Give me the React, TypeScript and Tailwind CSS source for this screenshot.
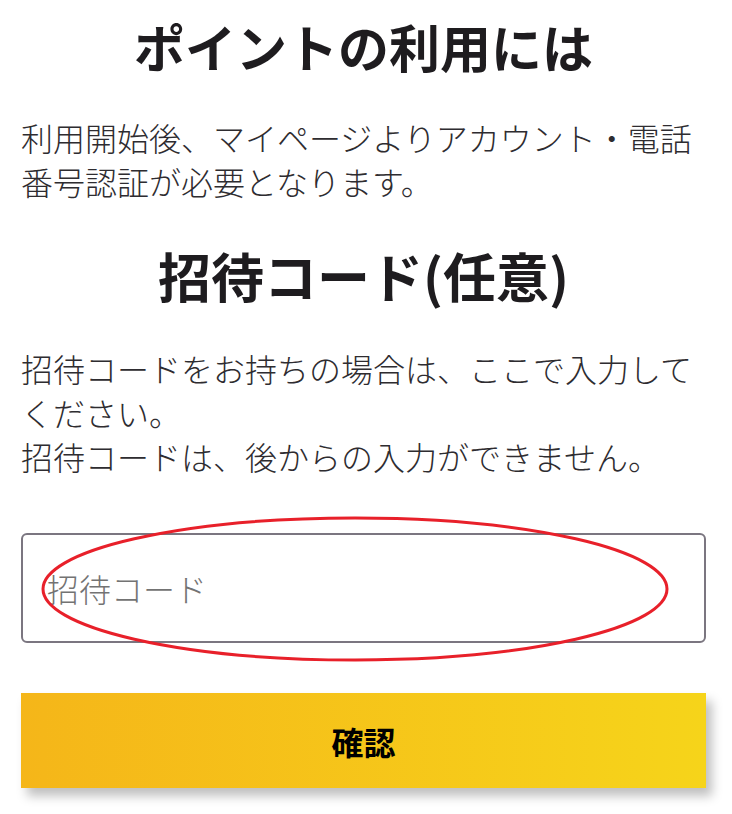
export default function App() {
  return (
    <div
      className="min-h-[814px] w-[732px] bg-white pl-[21px] pr-[26px] text-[#1e1c1f]"
      style={{ fontFamily: '"Noto Sans CJK JP", "Noto Sans", sans-serif' }}
    >
      <h1 className="pt-[10px] text-center text-[51px] font-bold leading-[72px]">
        ポイントの利用には
      </h1>
      <p className="mt-[33px] text-[32px] font-light leading-[44px] text-[#2e2c30]">
        利用開始後、マイページよりアカウント・電話番号認証が必要となります。
      </p>

      <h2 className="mt-[36px] text-center text-[53px] font-bold leading-[72px]">
        招待コード(任意)
      </h2>
      <p className="mt-[35px] text-[32px] font-light leading-[44px] text-[#2e2c30]">
        招待コードをお持ちの場合は、ここで入力してください。
        <br />
        招待コードは、後からの入力ができません。
      </p>

      <div className="relative mt-[55px]">
        <input
          className="h-[110px] w-full rounded-[6px] border-2 border-[#7b7680] bg-white px-[24px] text-[32px] font-light text-[#333] outline-none placeholder:text-[#737373]"
          placeholder="招待コード"
        />
        <svg
          className="pointer-events-none absolute left-[18px] top-[-18px]"
          width="632"
          height="148"
          viewBox="0 0 632 148"
        >
          <ellipse
            cx="316"
            cy="74"
            rx="312"
            ry="71"
            fill="none"
            stroke="#e8202a"
            strokeWidth="3"
          />
        </svg>
      </div>

      <button className="mt-[50px] flex h-[95px] w-full items-center justify-center bg-gradient-to-r from-[#f5b619] to-[#f6d41a] text-[32px] font-bold text-black shadow-[6px_8px_10px_rgba(0,0,0,0.25)]">
        確認
      </button>
    </div>
  );
}
